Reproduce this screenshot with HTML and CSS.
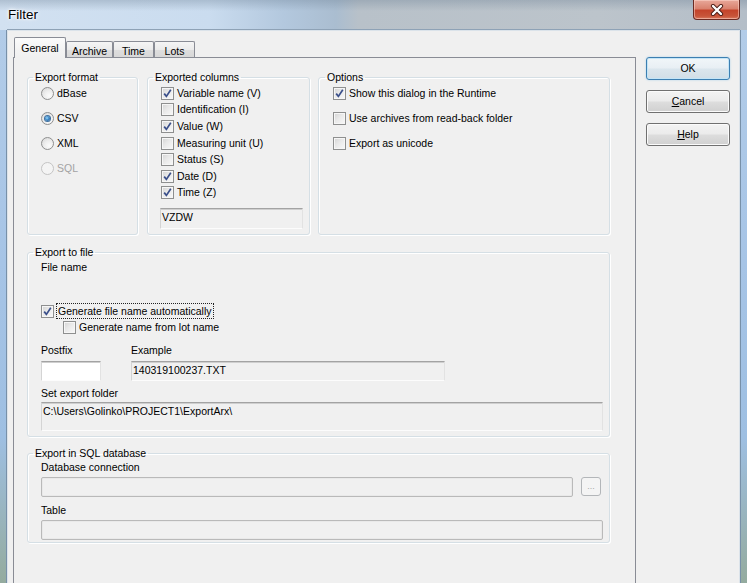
FILE: index.html
```html
<!DOCTYPE html>
<html>
<head>
<meta charset="utf-8">
<title>Filter</title>
<link rel="stylesheet" href="styles.css">
</head>
<body>
<div class="window">
  <div class="titlebar">
    <span class="title">Filter</span>
    <div class="close">
      <svg width="14" height="12" viewBox="0 0 14 12">
        <path d="M3 2 L11 10 M11 2 L3 10" stroke="#4a1d16" stroke-width="4.2" stroke-linecap="round"/>
        <path d="M3 2 L11 10 M11 2 L3 10" stroke="#ffffff" stroke-width="2.4" stroke-linecap="round"/>
      </svg>
    </div>
  </div>
  <div class="client">
    <div class="tabctl">
      <div class="tabstrip">
        <div class="tab active t-general">General</div>
        <div class="tab t-archive">Archive</div>
        <div class="tab t-time">Time</div>
        <div class="tab t-lots">Lots</div>
      </div>
      <div class="page">
        <div class="top-row">
          <fieldset class="grp grp-format">
            <legend>Export format</legend>
            <div class="rows wide">
              <div class="opt"><span class="radio"></span>dBase</div>
              <div class="opt"><span class="radio on"></span>CSV</div>
              <div class="opt"><span class="radio"></span>XML</div>
              <div class="opt disabled"><span class="radio"></span>SQL</div>
            </div>
          </fieldset>
          <fieldset class="grp grp-columns">
            <legend>Exported columns</legend>
            <div class="rows tight">
              <div class="opt"><span class="cb"><svg viewBox="0 0 11 11"><path d="M2.2 5.6 L4.4 8.4 L8.8 1.8" fill="none" stroke="#3a4f8a" stroke-width="1.7"/></svg></span>Variable name (V)</div>
              <div class="opt"><span class="cb"></span>Identification (I)</div>
              <div class="opt"><span class="cb"><svg viewBox="0 0 11 11"><path d="M2.2 5.6 L4.4 8.4 L8.8 1.8" fill="none" stroke="#3a4f8a" stroke-width="1.7"/></svg></span>Value (W)</div>
              <div class="opt"><span class="cb"></span>Measuring unit (U)</div>
              <div class="opt"><span class="cb"></span>Status (S)</div>
              <div class="opt"><span class="cb"><svg viewBox="0 0 11 11"><path d="M2.2 5.6 L4.4 8.4 L8.8 1.8" fill="none" stroke="#3a4f8a" stroke-width="1.7"/></svg></span>Date (D)</div>
              <div class="opt"><span class="cb"><svg viewBox="0 0 11 11"><path d="M2.2 5.6 L4.4 8.4 L8.8 1.8" fill="none" stroke="#3a4f8a" stroke-width="1.7"/></svg></span>Time (Z)</div>
            </div>
            <div class="edit code">VZDW</div>
          </fieldset>
          <fieldset class="grp grp-options">
            <legend>Options</legend>
            <div class="rows wide">
              <div class="opt"><span class="cb"><svg viewBox="0 0 11 11"><path d="M2.2 5.6 L4.4 8.4 L8.8 1.8" fill="none" stroke="#3a4f8a" stroke-width="1.7"/></svg></span>Show this dialog in the Runtime</div>
              <div class="opt"><span class="cb"></span>Use archives from read-back folder</div>
              <div class="opt"><span class="cb"></span>Export as unicode</div>
            </div>
          </fieldset>
        </div>

        <fieldset class="grp grp-file">
          <legend>Export to file</legend>
          <div class="lbl lbl-filename">File name</div>
          <div class="opt auto"><span class="cb"><svg viewBox="0 0 11 11"><path d="M2.2 5.6 L4.4 8.4 L8.8 1.8" fill="none" stroke="#3a4f8a" stroke-width="1.7"/></svg></span><span class="focus">Generate file name automatically</span></div>
          <div class="opt sub"><span class="cb"></span>Generate name from lot name</div>
          <div class="pf-grid">
            <div class="lbl">Postfix</div>
            <div class="lbl">Example</div>
            <div class="edit white"></div>
            <div class="edit">140319100237.TXT</div>
          </div>
          <div class="lbl lbl-folder">Set export folder</div>
          <div class="edit folder">C:\Users\Golinko\PROJECT1\ExportArx\</div>
        </fieldset>

        <fieldset class="grp grp-sql">
          <legend>Export in SQL database</legend>
          <div class="lbl lbl-db">Database connection</div>
          <div class="db-row">
            <div class="edit dis"></div>
            <div class="dots">...</div>
          </div>
          <div class="lbl lbl-table">Table</div>
          <div class="edit dis table"></div>
        </fieldset>
      </div>
    </div>
    <div class="buttons">
      <div class="btn default">OK</div>
      <div class="btn"><span><u>C</u>ancel</span></div>
      <div class="btn"><span><u>H</u>elp</span></div>
    </div>
  </div>
</div>
</body>
</html>
```

FILE: styles.css
```css
* { box-sizing: border-box; }
html, body { margin: 0; padding: 0; }
body {
  width: 747px;
  height: 583px;
  overflow: hidden;
  font-family: "Liberation Sans", Arial, sans-serif;
  font-size: 10.5px;
  color: #000;
  background: #f0f0f0;
}

.window {
  width: 747px;
  height: 583px;
  display: flex;
  flex-direction: column;
  background: linear-gradient(to bottom, #b4cde8 0, #a6c4e6 45%, #9ebfe2 75%, #94ab9e 100%);
}

/* Title bar (Aero glass approximation) */
.titlebar {
  height: 30px;
  flex: none;
  display: flex;
  justify-content: space-between;
  align-items: flex-start;
  background:
    linear-gradient(to bottom, rgba(110,130,150,0.35) 0, rgba(110,130,150,0) 11px),
    linear-gradient(to right, #d2e1f1 0, #cadcef 28%, #b3c8de 38%, #aabdd0 45%, #b8c1c9 48%, #bcc4cb 80%, #b4bec8 100%);
}
.title {
  padding-left: 8px;
  line-height: 30px;
  font-size: 13.5px;
  color: #000;
  text-shadow: 0 0 5px #fff, 0 0 3px #fff, 0 0 2px #fff;
}
.close {
  width: 47px;
  height: 20px;
  margin-right: 7px;
  margin-top: 0;
  border: 1px solid #6b2a22;
  border-top: none;
  border-radius: 0 0 4px 4px;
  background: linear-gradient(to bottom, #e8a89a 0, #d9826f 45%, #c4442b 55%, #c8553a 85%, #d97a60 100%);
  box-shadow: inset 0 0 0 1px rgba(255,220,210,0.5);
  display: flex;
  align-items: center;
  justify-content: center;
}
.close svg { display: block; }

/* Client area */
.client {
  flex: 1;
  min-height: 0;
  margin: 0 7px;
  display: flex;
  align-items: flex-start;
  padding: 6px 0 0 5px;
  background: #f0f0f0;
  border: 1px solid #dbe3ea;
  border-bottom: none;
  box-shadow: -1px 0 0 #7890a8, 1px 0 0 #7890a8, 0 -1px 0 #8ea2b6;
}

/* Tabs */
.tabctl { width: 623px; flex: none; }
.tabstrip {
  height: 20px;
  display: flex;
  align-items: flex-end;
  padding-left: 1px;
}
.tab {
  height: 16px;
  border: 1px solid #898c95;
  border-bottom: none;
  border-radius: 2px 2px 0 0;
  background: linear-gradient(to bottom, #f5f5f5 0, #ebebeb 50%, #dedede 52%, #d8d8d8 100%);
  display: flex;
  justify-content: center;
  align-items: center;
  padding-top: 2px;
  line-height: 12px;
}
.tab.active {
  height: 21px;
  margin-bottom: -1px;
  position: relative;
  z-index: 1;
  background: linear-gradient(to bottom, #fbfbfb 0, #f3f3f3 60%, #f0f0f0 100%);
  padding-top: 0;
}
.t-general { width: 52px; }
.t-archive { width: 47px; }
.t-time { width: 41px; }
.t-lots { width: 41px; }

.page {
  height: 540px;
  border: 1px solid #898c95;
  background: #f0f0f0;
  padding: 13px 25px 0 13px;
}

/* Group boxes */
.grp {
  margin: 0;
  padding: 0 6px 0 13px;
  border: 1px solid #d5dfe5;
  border-radius: 3px;
  min-width: 0;
  box-shadow: inset 1px 1px 0 #fff, 1px 1px 0 #fff;
}
.grp legend {
  padding: 0 2px;
  margin-left: -8px;
  line-height: 12px;
  height: 12px;
}

.top-row {
  display: flex;
  height: 164px;
}
.grp-format { width: 111px; }
.grp-columns { width: 163px; margin-left: 9px; }
.grp-options { width: 292px; margin-left: 8px; padding-left: 14px; }

.rows { display: flex; flex-direction: column; margin-top: 2px; }
.rows.wide { gap: 9px; }
.rows.wide .opt { height: 16px; }
.rows.tight .opt { height: 16.6px; }

.opt {
  display: flex;
  align-items: center;
  gap: 3px;
  line-height: 13px;
  white-space: nowrap;
}
.opt.disabled { color: #a3a3a3; }

.radio {
  width: 13px;
  height: 13px;
  flex: none;
  border-radius: 50%;
  border: 1px solid #8e8f8f;
  background: radial-gradient(circle at 65% 70%, #fbfbfb 0, #eeeeee 45%, #d4d4d4 100%);
  display: flex;
  align-items: center;
  justify-content: center;
}
.radio.on::after {
  content: "";
  width: 5px;
  height: 5px;
  border-radius: 50%;
  background: radial-gradient(circle at 40% 40%, #9ddcfa 0, #3b86c6 45%, #1c4f87 100%);
  box-shadow: 0 0 0 1px #3e6f9e;
}
.opt.disabled .radio {
  border-color: #c4c4c4;
  background: #f4f4f4;
}

.cb {
  width: 13px;
  height: 13px;
  flex: none;
  border: 1px solid #8e8f8f;
  background: linear-gradient(135deg, #d3d3d3 0, #e9e9e9 45%, #f9f9f9 100%);
  box-shadow: inset 0 0 0 1px #f6f6f6;
  display: flex;
  align-items: center;
  justify-content: center;
}
.cb svg { width: 11px; height: 11px; display: block; }

/* Edits */
.edit {
  height: 20px;
  background: #f0f0f0;
  border: 1px solid;
  border-color: #a3a3a3 #e2e2e2 #fcfcfc #d4d4d4;
  box-shadow: inset 0 1px 0 #cfcfcf;
  padding: 2px 1px 0;
  line-height: 13px;
  white-space: nowrap;
  overflow: hidden;
}
.edit.white { background: #fff; }
.edit.code { width: 143px; height: 21px; margin-top: 7px; margin-left: -1px; }
.edit.folder { height: 29px; margin-top: 2px; }
.edit.dis {
  border: 1px solid #b9b9b9;
  border-radius: 2px;
  box-shadow: inset 0 0 0 1px #e9e9e9;
}

.lbl { line-height: 13px; white-space: nowrap; }

/* Export to file */
.grp-file { height: 191px; margin-top: 11px; }
.lbl-filename { margin-top: 3px; }
.opt.auto { height: 16px; margin-top: 29px; gap: 2px; }
.focus { border: 1px dotted #222; padding: 0 1px; line-height: 14px; }
.opt.sub { height: 16px; margin-left: 22px; }
.pf-grid {
  display: grid;
  grid-template-columns: 60px 314px;
  column-gap: 30px;
  row-gap: 4px;
  margin-top: 9px;
}
.lbl-folder { margin-top: 6px; }

/* SQL */
.grp-sql { height: 96px; margin-top: 10px; }
.lbl-db { margin-top: 2px; }
.db-row {
  display: grid;
  grid-template-columns: 1fr 20px;
  column-gap: 8px;
  margin-top: 3px;
  margin-right: 2px;
}
.dots {
  height: 19px;
  border: 1px solid #b3b6b9;
  border-radius: 3px;
  background: #f4f4f4;
  color: #a8a8a8;
  font-size: 9px;
  line-height: 17px;
  text-align: center;
}
.lbl-table { margin-top: 7px; }
.edit.table { margin-top: 3px; }

/* Buttons */
.buttons {
  display: flex;
  flex-direction: column;
  gap: 10px;
  margin-left: 10px;
  margin-top: 20px;
  width: 84px;
}
.btn {
  height: 23px;
  border: 1px solid #707070;
  border-radius: 3px;
  background: linear-gradient(to bottom, #f3f3f3 0, #ebebeb 48%, #dddddd 52%, #d0d0d0 100%);
  box-shadow: inset 0 0 0 1px #fbfbfb;
  display: flex;
  align-items: center;
  justify-content: center;
  line-height: 13px;
}
.btn.default {
  border-color: #3c7fb1;
  background: linear-gradient(to bottom, #f1f6f9 0, #e8eff4 48%, #dbe6ed 52%, #d1dee7 100%);
  box-shadow: inset 0 0 0 1px #c4e5f7, 0 0 2px rgba(80,170,230,0.45);
}
```
